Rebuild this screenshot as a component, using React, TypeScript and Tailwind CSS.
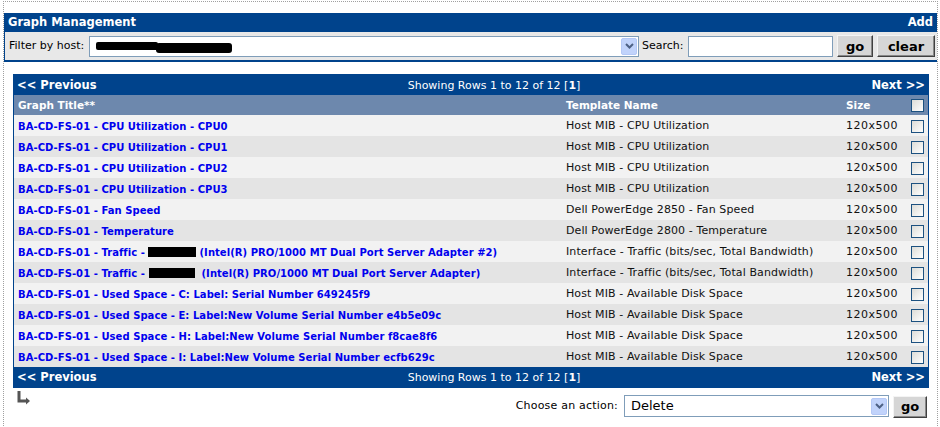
import React from 'react';

const rows: { title: React.ReactNode; template: string }[] = [
  { title: 'BA-CD-FS-01 - CPU Utilization - CPU0', template: 'Host MIB - CPU Utilization' },
  { title: 'BA-CD-FS-01 - CPU Utilization - CPU1', template: 'Host MIB - CPU Utilization' },
  { title: 'BA-CD-FS-01 - CPU Utilization - CPU2', template: 'Host MIB - CPU Utilization' },
  { title: 'BA-CD-FS-01 - CPU Utilization - CPU3', template: 'Host MIB - CPU Utilization' },
  { title: 'BA-CD-FS-01 - Fan Speed', template: 'Dell PowerEdge 2850 - Fan Speed' },
  { title: 'BA-CD-FS-01 - Temperature', template: 'Dell PowerEdge 2800 - Temperature' },
  {
    title: (
      <>
        BA-CD-FS-01 - Traffic - <span className="inline-block w-[48px] h-[10px] bg-black align-[-1px]"></span>
        <span className="ml-[3px]">(Intel(R) PRO/1000 MT Dual Port Server Adapter #2)</span>
      </>
    ),
    template: 'Interface - Traffic (bits/sec, Total Bandwidth)',
  },
  {
    title: (
      <>
        BA-CD-FS-01 - Traffic - <span className="inline-block w-[46px] h-[10px] bg-black align-[-1px] ml-[1px]"></span>
        <span className="ml-[6px]">(Intel(R) PRO/1000 MT Dual Port Server Adapter)</span>
      </>
    ),
    template: 'Interface - Traffic (bits/sec, Total Bandwidth)',
  },
  { title: 'BA-CD-FS-01 - Used Space - C: Label: Serial Number 649245f9', template: 'Host MIB - Available Disk Space' },
  { title: 'BA-CD-FS-01 - Used Space - E: Label:New Volume Serial Number e4b5e09c', template: 'Host MIB - Available Disk Space' },
  { title: 'BA-CD-FS-01 - Used Space - H: Label:New Volume Serial Number f8cae8f6', template: 'Host MIB - Available Disk Space' },
  { title: 'BA-CD-FS-01 - Used Space - I: Label:New Volume Serial Number ecfb629c', template: 'Host MIB - Available Disk Space' },
];

const Checkbox = () => (
  <span className="block w-[13px] h-[13px] border border-[#1c5180] bg-gradient-to-br from-[#dcdcd7] to-white"></span>
);

const SelectArrow = () => (
  <span className="flex items-center justify-center w-[16px] h-[17px] bg-[#c1d3fb] border border-[#b4c8f6] rounded-[2px]">
    <svg width="9" height="6" viewBox="0 0 9 6">
      <path d="M1 1 L4.5 4.5 L8 1" fill="none" stroke="#4d6185" strokeWidth="2" />
    </svg>
  </span>
);

const Button = ({ label, w }: { label: string; w: string }) => (
  <button
    className={`${w} h-[22px] bg-[#d6d6d6] border border-t-[#f4f4f4] border-l-[#f4f4f4] border-r-[#404040] border-b-[#404040] shadow-[inset_-1px_-1px_0_#888] text-[13px] font-bold text-black leading-none`}
  >
    {label}
  </button>
);

const NavRow = () => (
  <div className="flex items-center justify-between h-[20px] bg-[#00438c] text-white px-[3px] pt-[2px]">
    <span className="w-[120px] text-[11.5px] font-bold">&lt;&lt; Previous</span>
    <span className="text-[11px] pl-[46px]">
      Showing Rows 1 to 12 of 12 [<b>1</b>]
    </span>
    <span className="w-[120px] text-right text-[11.5px] font-bold">Next &gt;&gt;</span>
  </div>
);

export default function App() {
  return (
    <div className="w-[940px] h-[427px] bg-white overflow-hidden pl-[3px] font-['DejaVu_Sans',Verdana,sans-serif]">
      <div className="w-[935px] h-[427px] mt-[1px] border-l border-t border-r border-dotted border-[#a0a0a0] pt-[11px]">
        {/* header */}
        <div className="flex items-center justify-between h-[19px] bg-[#00438c] text-white px-[4px] pt-[1px]">
          <span className="text-[11.5px] font-bold">Graph Management</span>
          <span className="text-[11.5px] font-bold">Add</span>
        </div>
        {/* filter */}
        <div className="flex items-center h-[30px] bg-[#e8e8e8] border-l border-b-2 border-[#00438c] pl-[4px]">
          <span className="text-[11px] text-black w-[80px]">Filter by host:</span>
          <div className="flex items-center justify-between w-[550px] h-[21px] bg-white border border-[#7f9db9] pl-[6px] pr-[1px]">
            <div className="flex items-center">
              <span className="block w-[62px] h-[8px] bg-black rounded-[2px]"></span>
              <span className="block w-[76px] h-[10px] bg-black rounded-[3px] -ml-[2px] mt-[3px]"></span>
            </div>
            <SelectArrow />
          </div>
          <span className="text-[11px] text-black ml-[3px] w-[46px]">Search:</span>
          <div className="w-[145px] h-[21px] bg-white border border-[#7f9db9]"></div>
          <div className="ml-[4px] flex gap-[4px]">
            <Button label="go" w="w-[36px]" />
            <Button label="clear" w="w-[58px]" />
          </div>
        </div>
        {/* table */}
        <div className="ml-[9px] mt-[12px] w-[916px] border border-[#00438c]">
          <NavRow />
          <div className="grid grid-cols-[548px_280px_64px_22px] items-center h-[20px] bg-[#6d88ad] text-white text-[10.5px] font-bold pt-[1px]">
            <span className="pl-[4px]">Graph Title**</span>
            <span className="pl-[4px]">Template Name</span>
            <span className="pl-[4px]">Size</span>
            <span className="pl-[5px]">
              <Checkbox />
            </span>
          </div>
          {rows.map((r, i) => (
            <div
              key={i}
              className={`grid grid-cols-[548px_280px_64px_22px] items-center h-[21px] pt-[1px] ${i % 2 === 0 ? 'bg-[#f2f2f2]' : 'bg-[#e4e4e4]'}`}
            >
              <span className="pl-[4px] text-[10px] font-bold text-[#0000ee] whitespace-nowrap tracking-[0.05px]">{r.title}</span>
              <span className="pl-[4px] text-[11px] text-[#111] whitespace-nowrap tracking-[0.1px]">{r.template}</span>
              <span className="pl-[4px] text-[11px] text-[#111] tracking-[0.5px]">120x500</span>
              <span className="pl-[5px]">
                <Checkbox />
              </span>
            </div>
          ))}
          <NavRow />
        </div>
        {/* actions */}
        <div className="flex ml-[9px] w-[916px]">
          <div className="pl-[4px] pt-[3px]">
            <svg width="14" height="14" viewBox="0 0 14 14">
              <path d="M2 0 V10 H9" fill="none" stroke="#555" strokeWidth="3" />
              <path d="M9 6.5 L13 10 L9 13.5 Z" fill="#555" />
            </svg>
          </div>
          <div className="flex items-center ml-auto mt-[6px] mr-[2px]">
            <span className="text-[11px] text-black mr-[6px] tracking-[0.2px]">Choose an action:</span>
            <div className="flex items-center justify-between w-[265px] h-[22px] bg-white border border-[#7f9db9] pl-[6px] pr-[1px]">
              <span className="text-[13px] text-black">Delete</span>
              <SelectArrow />
            </div>
            <div className="ml-[4px]">
              <Button label="go" w="w-[34px]" />
            </div>
          </div>
        </div>
      </div>
    </div>
  );
}
